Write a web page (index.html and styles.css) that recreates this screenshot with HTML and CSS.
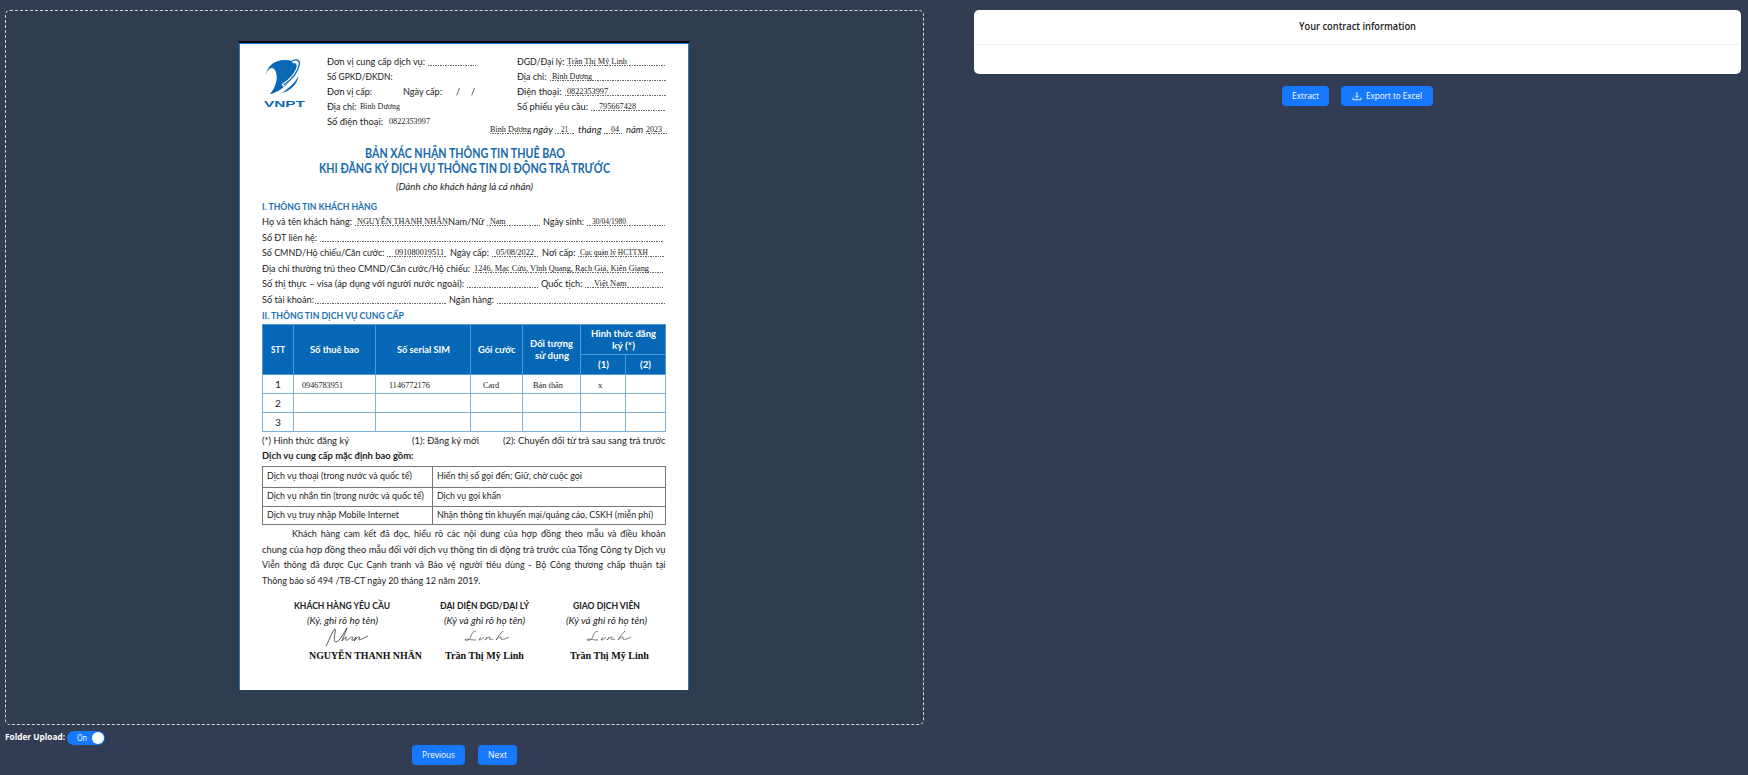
FILE: index.html
```html
<!DOCTYPE html>
<html lang="vi">
<head>
<meta charset="utf-8">
<title>Contract extraction</title>
<link rel="stylesheet" href="styles.css">
</head>
<body>
<main class="page">
<section class="left">
  <div class="dropzone">
    <article class="doc">
      <header class="head">
        <div class="logo">
          <svg class="mark" viewBox="105 66 114 116">
            <path class="fill" d="M111 119C112 92 136 72 166 72C182 71 196 76 203 86C206 102 197 122 182 138C165 155 146 169 122 175C135 160 144 141 143 122C142 101 132 92 122 98C115 103 112 111 111 119Z"/>
            <path class="gap" d="M190 79C203 70 212 73 210 86C206 106 190 130 160 149"/>
            <path class="ring" d="M187 76C202 68 213 71 211 85C207 106 190 130 164 147"/>
            <path class="fill" d="M209 119C205 146 183 165 156 172C181 156 198 140 209 119Z"/>
          </svg>
          <span class="vnpt" data-w="41">VNPT</span>
        </div>
        <div class="issuer">
          <p class="row"><span data-w="98">Đơn vị cung cấp dịch vụ:</span><span class="dots" data-g="3" data-w="48"></span></p>
          <p class="row"><span data-w="65.5">Số GPKD/ĐKDN:</span></p>
          <p class="row"><span data-w="45">Đơn vị cấp:</span><span data-g="30.5" data-w="39">Ngày cấp:</span><span data-g="14" data-w="4">/</span><span data-g="11" data-w="4">/</span></p>
          <p class="row"><span data-w="29.5">Địa chỉ:</span><span class="ink" data-g="3" data-w="40">Bình Dương</span></p>
          <p class="row"><span data-w="56">Số điện thoại:</span><span class="ink" data-g="5.5" data-w="41">0822353997</span></p>
        </div>
        <div class="agent">
          <p class="row in"><span data-w="47.5">ĐGD/Đại lý:</span><span class="dots" data-g="2" data-w="99"><span class="ink" data-w="60">Trần Thị Mỹ Linh</span></span></p>
          <p class="row in"><span data-w="29.5">Địa chỉ:</span><span class="dots" data-g="3" data-w="116"><span class="ink" data-g="2" data-w="40">Bình Dương</span></span></p>
          <p class="row in"><span data-w="44.5">Điện thoại:</span><span class="dots" data-g="3" data-w="101"><span class="ink" data-g="2" data-w="41">0822353997</span></span></p>
          <p class="row in"><span data-w="71">Số phiếu yêu cầu:</span><span class="dots" data-g="3" data-w="75"><span class="ink" data-g="8" data-w="37">795667428</span></span></p>
          <p class="row date"><span class="dots" data-w="41"><span class="ink" data-w="41">Bình Dương</span></span><em data-g="2" data-w="20">ngày</em><span class="dots" data-g="2.5" data-w="20"><span class="ink" data-g="6" data-w="7">21</span></span><em data-g="3" data-w="23.5">tháng</em><span class="dots" data-g="2.5" data-w="18"><span class="ink" data-g="7" data-w="8">04</span></span><em data-g="4" data-w="17">năm</em><span class="dots" data-g="2.5" data-w="21"><span class="ink" data-w="16">2023</span></span></p>
        </div>
      </header>

      <h1 class="title"><span data-w="200">BẢN XÁC NHẬN THÔNG TIN THUÊ BAO</span><span data-w="291">KHI ĐĂNG KÝ DỊCH VỤ THÔNG TIN DI ĐỘNG TRẢ TRƯỚC</span></h1>
      <p class="row subtitle"><em data-w="137">(Dành cho khách hàng là cá nhân)</em></p>

      <h2 class="section"><span data-w="115">I. THÔNG TIN KHÁCH HÀNG</span></h2>
      <div class="fields">
        <p class="row"><span data-w="90">Họ và tên khách hàng:</span><span class="dots" data-g="2.5" data-w="93.5"><span class="ink" data-g="2.5" data-w="91">NGUYỄN THANH NHÂN</span></span><span data-w="36">Nam/Nữ</span><span class="dots" data-g="3" data-w="53"><span class="ink" data-g="2.5" data-w="15.5">Nam</span></span><span data-g="2.5" data-w="41">Ngày sinh:</span><span class="dots" data-g="3" data-w="78"><span class="ink" data-g="5.5" data-w="34">30/04/1980</span></span></p>
        <p class="row"><span data-w="55">Số ĐT liên hệ:</span><span class="dots" data-g="3" data-w="344"></span></p>
        <p class="row"><span data-w="122.5">Số CMND/Hộ chiếu/Căn cước:</span><span class="dots" data-g="2.5" data-w="60"><span class="ink" data-g="8" data-w="49">091080019511</span></span><span data-g="3" data-w="39">Ngày cấp:</span><span class="dots" data-g="2.5" data-w="47"><span class="ink" data-g="4" data-w="38">05/08/2022</span></span><span data-g="3" data-w="33.5">Nơi cấp:</span><span class="dots" data-g="3" data-w="85.5"><span class="ink" data-g="2" data-w="68">Cục quản lý HCTTXH</span></span></p>
        <p class="row"><span data-w="208">Địa chỉ thường trú theo CMND/Căn cước/Hộ chiếu:</span><span class="dots" data-g="3" data-w="190"><span class="ink" data-g="1" data-w="175">1246, Mạc Cửu, Vĩnh Quang, Rạch Giá, Kiên Giang</span></span></p>
        <p class="row"><span data-w="202">Số thị thực – visa (áp dụng với người nước ngoài):</span><span class="dots" data-g="3" data-w="71"></span><span data-g="3" data-w="41.5">Quốc tịch:</span><span class="dots" data-g="2.5" data-w="78"><span class="ink" data-g="8.5" data-w="32.5">Việt Nam</span></span></p>
        <p class="row"><span data-w="52">Số tài khoản:</span><span class="dots" data-g="1" data-w="131"></span><span data-g="3" data-w="45">Ngân hàng:</span><span class="dots" data-g="3" data-w="168"></span></p>
      </div>
      <h2 class="section"><span data-w="142">II. THÔNG TIN DỊCH VỤ CUNG CẤP</span></h2>

      <table class="services">
        <colgroup><col class="c1"><col class="c2"><col class="c3"><col class="c4"><col class="c5"><col class="c6"><col class="c7"></colgroup>
        <thead>
          <tr class="h1r"><th rowspan="2"><span data-w="14">STT</span></th><th rowspan="2"><span data-w="49">Số thuê bao</span></th><th rowspan="2"><span data-w="53">Số serial SIM</span></th><th rowspan="2"><span data-w="37.5">Gói cước</span></th><th rowspan="2"><span data-w="43">Đối tượng</span><br><span data-w="34">sử dụng</span></th><th colspan="2"><span data-w="65">Hình thức đăng</span><br><span data-w="23">ký (*)</span></th></tr>
          <tr class="h2r"><th><span data-w="11">(1)</span></th><th><span data-w="11">(2)</span></th></tr>
        </thead>
        <tbody>
          <tr><td>1</td><td class="hand a"><span data-w="41">0946783951</span></td><td class="hand b"><span data-w="41">1146772176</span></td><td class="hand c"><span data-w="16">Card</span></td><td class="hand d"><span data-w="30">Bản thân</span></td><td class="hand e">x</td><td></td></tr>
          <tr><td>2</td><td></td><td></td><td></td><td></td><td></td><td></td></tr>
          <tr><td>3</td><td></td><td></td><td></td><td></td><td></td><td></td></tr>
        </tbody>
      </table>

      <p class="row legend"><span data-w="87">(*) Hình thức đăng ký</span><span data-g="63" data-w="67">(1): Đăng ký mới</span><span data-g="23.5" data-w="162.5">(2): Chuyển đổi từ trả sau sang trả trước</span></p>
      <p class="row strong"><span data-w="151.5">Dịch vụ cung cấp mặc định bao gồm:</span></p>

      <table class="included">
        <colgroup><col class="k"><col></colgroup>
        <tr class="r1"><td><span data-w="145">Dịch vụ thoại (trong nước và quốc tế)</span></td><td><span data-w="145">Hiển thị số gọi đến; Giữ, chờ cuộc gọi</span></td></tr>
        <tr class="r2"><td><span data-w="157">Dịch vụ nhắn tin (trong nước và quốc tế)</span></td><td><span data-w="64">Dịch vụ gọi khẩn</span></td></tr>
        <tr class="r3"><td><span data-w="132">Dịch vụ truy nhập Mobile Internet</span></td><td><span data-w="216">Nhận thông tin khuyến mại/quảng cáo, CSKH (miễn phí)</span></td></tr>
      </table>

      <div class="terms">
        <p class="first"><span class="wide" data-w="373.5">Khách hàng cam kết đã đọc, hiểu rõ các nội dung của hợp đồng theo mẫu và điều khoản</span></p>
        <p><span data-w="403.5">chung của hợp đồng theo mẫu đối với dịch vụ thông tin di động trả trước của Tổng Công ty Dịch vụ</span></p>
        <p><span class="wide" data-w="403.5">Viễn thông đã được Cục Cạnh tranh và Bảo vệ người tiêu dùng - Bộ Công thương chấp thuận tại</span></p>
        <p><span data-w="218.5">Thông báo số 494 /TB-CT ngày 20 tháng 12 năm 2019.</span></p>
      </div>

      <footer class="signs">
        <div class="sign customer">
          <b data-w="96">KHÁCH HÀNG YÊU CẦU</b>
          <em data-w="71">(Ký, ghi rõ họ tên)</em>
          <svg class="scribble" viewBox="0 0 48 20"><path d="M3 19C6 14 8 7 11 3C12 1 13 2 12 6C11 11 11 15 13 15C17 14 20 7 24 1C22 7 19 13 19 14C22 10 24 9 23 11C22 14 24 14 27 11C29 9 31 10 29 12C28 15 32 12 33 10L31 14C35 9 38 9 36 12C35 14 39 12 45 9"/></svg>
          <strong data-w="113">NGUYỄN THANH NHÂN</strong>
        </div>
        <div class="sign dealer">
          <b data-w="89">ĐẠI DIỆN ĐGD/ĐẠI LÝ</b>
          <em data-w="81">(Ký và ghi rõ họ tên)</em>
          <svg class="scribble thin" viewBox="0 0 48 20"><path d="M14 5C12 3 10 6 9 9C8 13 5 14 3 13C3 11 7 13 14 13M19 10L17 13C19 13 20 12 22 10M20 7.5V8M25 10L23 13C26 10 29 9 28 11C27 13 28 13 31 12M41 4C38 7 36 10 34 13C37 10 40 9 39 11C38 13 42 13 47 10"/></svg>
          <strong data-w="79">Trần Thị Mỹ Linh</strong>
        </div>
        <div class="sign clerk">
          <b data-w="67">GIAO DỊCH VIÊN</b>
          <em data-w="81">(Ký và ghi rõ họ tên)</em>
          <svg class="scribble thin" viewBox="0 0 48 20"><path d="M14 5C12 3 10 6 9 9C8 13 5 14 3 13C3 11 7 13 14 13M19 10L17 13C19 13 20 12 22 10M20 7.5V8M25 10L23 13C26 10 29 9 28 11C27 13 28 13 31 12M41 4C38 7 36 10 34 13C37 10 40 9 39 11C38 13 42 13 47 10"/></svg>
          <strong data-w="79">Trần Thị Mỹ Linh</strong>
        </div>
      </footer>
    </article>
  </div>
  <div class="toggle"><span class="label" data-w="60">Folder Upload:</span><span class="switch"><span data-w="10">On</span><i class="knob"></i></span></div>
  <nav class="pager"><button class="btn prev"><span data-w="33">Previous</span></button><button class="btn next"><span data-w="19">Next</span></button></nav>
</section>
<section class="right">
  <div class="card"><h3 class="card-title"><span data-w="117">Your contract information</span></h3></div>
  <div class="actions">
    <button class="btn extract"><span data-w="27">Extract</span></button>
    <button class="btn export"><svg class="dl" viewBox="0 0 10 10"><path d="M5 1V6.5M3.2 4.8L5 6.6L6.8 4.8M1 6.5V8.7H9V6.5"/></svg><span data-w="56">Export to Excel</span></button>
  </div>
</section>
</main>
<script src="fit.js"></script>
</body>
</html>
```
FILE: styles.css
```css
* { box-sizing: border-box; }
body { margin: 0; background: #323d54; font-family: "Open Sans", "Noto Sans", sans-serif; font-size: 9px; color: #fff; font-variant-ligatures: none; }
p, h1, h2, h3 { margin: 0; font-weight: inherit; font-size: inherit; }
span[data-w], em[data-w], b[data-w], strong[data-w] { display: inline-block; flex-shrink: 0; white-space: nowrap; transform-origin: 0 50%; }
.page { display: flex; height: 775px; padding: 10px 7px 0 5px; overflow: hidden; }
.left { width: 919px; }
.right { width: 767px; margin-left: 50px; }

.dropzone { height: 715px; border: 1px dashed #d9d9d9; border-radius: 5px; background: #303c4f; padding: 30px 0 0 233px; }
.toggle { display: flex; align-items: center; height: 14px; margin-top: 6px; }
.label { font-weight: 700; font-size: 9.5px; line-height: 12px; padding-bottom: 2px; }
.switch { display: flex; align-items: center; justify-content: space-between; width: 37.5px; height: 14px; margin-left: 2px; padding: 0 1px 0 10px; border-radius: 7px; background: #1677ff; font-size: 8.5px; line-height: 12px; }
.knob { width: 12px; height: 12px; border-radius: 50%; background: #fff; }
.pager { display: flex; gap: 13px; padding-left: 407px; }
.btn { display: flex; align-items: center; justify-content: center; height: 20px; padding: 0; border: 0; border-radius: 4px; background: #1677ff; color: #fff; font: 9.6px/20px "Open Sans", "Noto Sans", sans-serif; }
.prev { width: 53px; }
.next { width: 39px; }
.card { height: 64px; border-radius: 5px; background: #fff; }
.card-title { display: flex; justify-content: center; height: 35px; border-bottom: 1px solid #f0f0f0; color: #222; font-weight: 600; font-size: 9.8px; line-height: 33px; }
.actions { display: flex; justify-content: center; gap: 12px; margin-top: 12px; }
.extract { width: 47px; }
.export { width: 92px; gap: 4px; }
.dl { width: 10px; height: 10px; fill: none; stroke: #fff; stroke-width: .9; }

.doc { width: 450px; height: 649px; border-top: 2px solid #05070b; background: #fff; box-shadow: inset 1px 1px #2a7cbf, inset -1px 0 #2a7cbf; padding: 11px 22px 0 23px; color: #222; font: 10.2px/15px Lato, "Open Sans", sans-serif; }
.row { display: flex; height: 15px; }
.ink { font-family: "Liberation Serif", serif; font-size: 8.8px; color: #222; }
.row .dots { display: inline-flex; height: 15px; background: repeating-linear-gradient(90deg, #666 0 1px, transparent 1px 1.67px) 0 11px / 100% 1px no-repeat; }
.dots .ink { line-height: 14px; }
.head { display: flex; height: 83px; }
.logo { width: 65px; padding: 3.5px 0 0 1.5px; color: #0a68b4; }
.mark { display: block; width: 38px; height: 38.6px; margin-left: .5px; }
.fill { fill: #0a68b4; }
.gap { fill: none; stroke: #fff; stroke-width: 9; }
.ring { fill: none; stroke: #0a68b4; stroke-width: 4; }
.vnpt { font: bold 9.5px/10px "Liberation Sans", sans-serif; margin-top: 3px; }
.issuer { width: 162.5px; }
.in { padding-left: 27.5px; }
.date { margin-top: 7.5px; }
.title { display: flex; flex-direction: column; align-items: center; margin-top: 8.5px; color: #1668ab; font-size: 13px; font-weight: 700; line-height: 15px; }
.subtitle { justify-content: center; margin-top: 3px; }
.section { height: 15.6px; color: #1c70b2; font-weight: 700; line-height: 15.6px; }
.subtitle + .section { margin-top: 5px; }
.fields .row { height: 15.6px; }

table { border-collapse: collapse; table-layout: fixed; width: 404px; }
th, td { padding: 0; line-height: 12px; }
.services { margin-top: 1px; text-align: center; }
.services th, .services td { border: 1px solid #7db2dc; }
.services th { background: #0567b5; color: #fff; font-weight: 700; border-color: #4f9ad4; padding-bottom: 1px; }
.services td { height: 19px; }
.h1r { height: 30px; }
.h2r { height: 19.5px; }
.c1 { width: 31px; } .c2 { width: 82px; } .c3 { width: 95px; } .c4 { width: 52px; } .c5 { width: 58px; } .c6 { width: 45px; } .c7 { width: 40px; }
.services .hand { font-family: "Liberation Serif", serif; font-size: 8.8px; text-align: left; padding-top: 2px; }
.a { padding-left: 7.5px; } .b { padding-left: 13px; } .c { padding-left: 12px; } .d { padding-left: 10px; } .e { padding-left: 17px; }
.legend { margin-top: 1px; }
.strong { margin-top: .5px; font-weight: 700; }
.included { margin-top: 2.5px; }
.included td { border: 1px solid #777; padding-left: 4px; padding-bottom: 4px; }
.k { width: 170px; }
.r1 { height: 21px; } .r2 { height: 19px; } .r3 { height: 18px; }
.included .r3 td { padding-bottom: 2.5px; }
.terms { margin-top: 1.5px; width: 403.5px; }
.terms p { height: 15.6px; line-height: 15.6px; white-space: nowrap; }
.terms .first { padding-left: 30px; }
.wide { word-spacing: 1.8px; }
.signs { display: flex; margin-top: 9px; padding-left: .7px; }
.sign { display: flex; flex-direction: column; align-items: center; }
.customer { width: 161px; }
.customer b { position: relative; left: -1px; }
.customer strong { align-self: flex-end; position: relative; left: -1.5px; }
.customer .scribble { margin-left: 8px; }
.dealer { width: 123px; }
.clerk { width: 122px; }
.scribble { width: 48px; height: 20px; margin-top: -1px; fill: none; stroke: #333; stroke-width: .8; }
.thin { stroke: #555; margin-left: 4px; }
.sign strong { font: bold 10px/16px "Liberation Serif", serif; color: #111; margin-top: 1px; }
.clerk strong { position: relative; left: 3px; }
```
FILE: fit.js
```js
// Condenses or stretches each text run to its printed width.
var runs = Array.from(document.querySelectorAll('[data-w]'));
var natural = runs.map(function (el) { return el.getBoundingClientRect().width; });
runs.forEach(function (el, i) {
  var width = parseFloat(el.dataset.w);
  if (el.classList.contains('dots')) {
    el.style.width = width + 'px';
  } else {
    el.style.transform = 'scaleX(' + width / natural[i] + ')';
    el.style.marginRight = width - natural[i] + 'px';
  }
  if (el.dataset.g) el.style.marginLeft = el.dataset.g + 'px';
});
```
